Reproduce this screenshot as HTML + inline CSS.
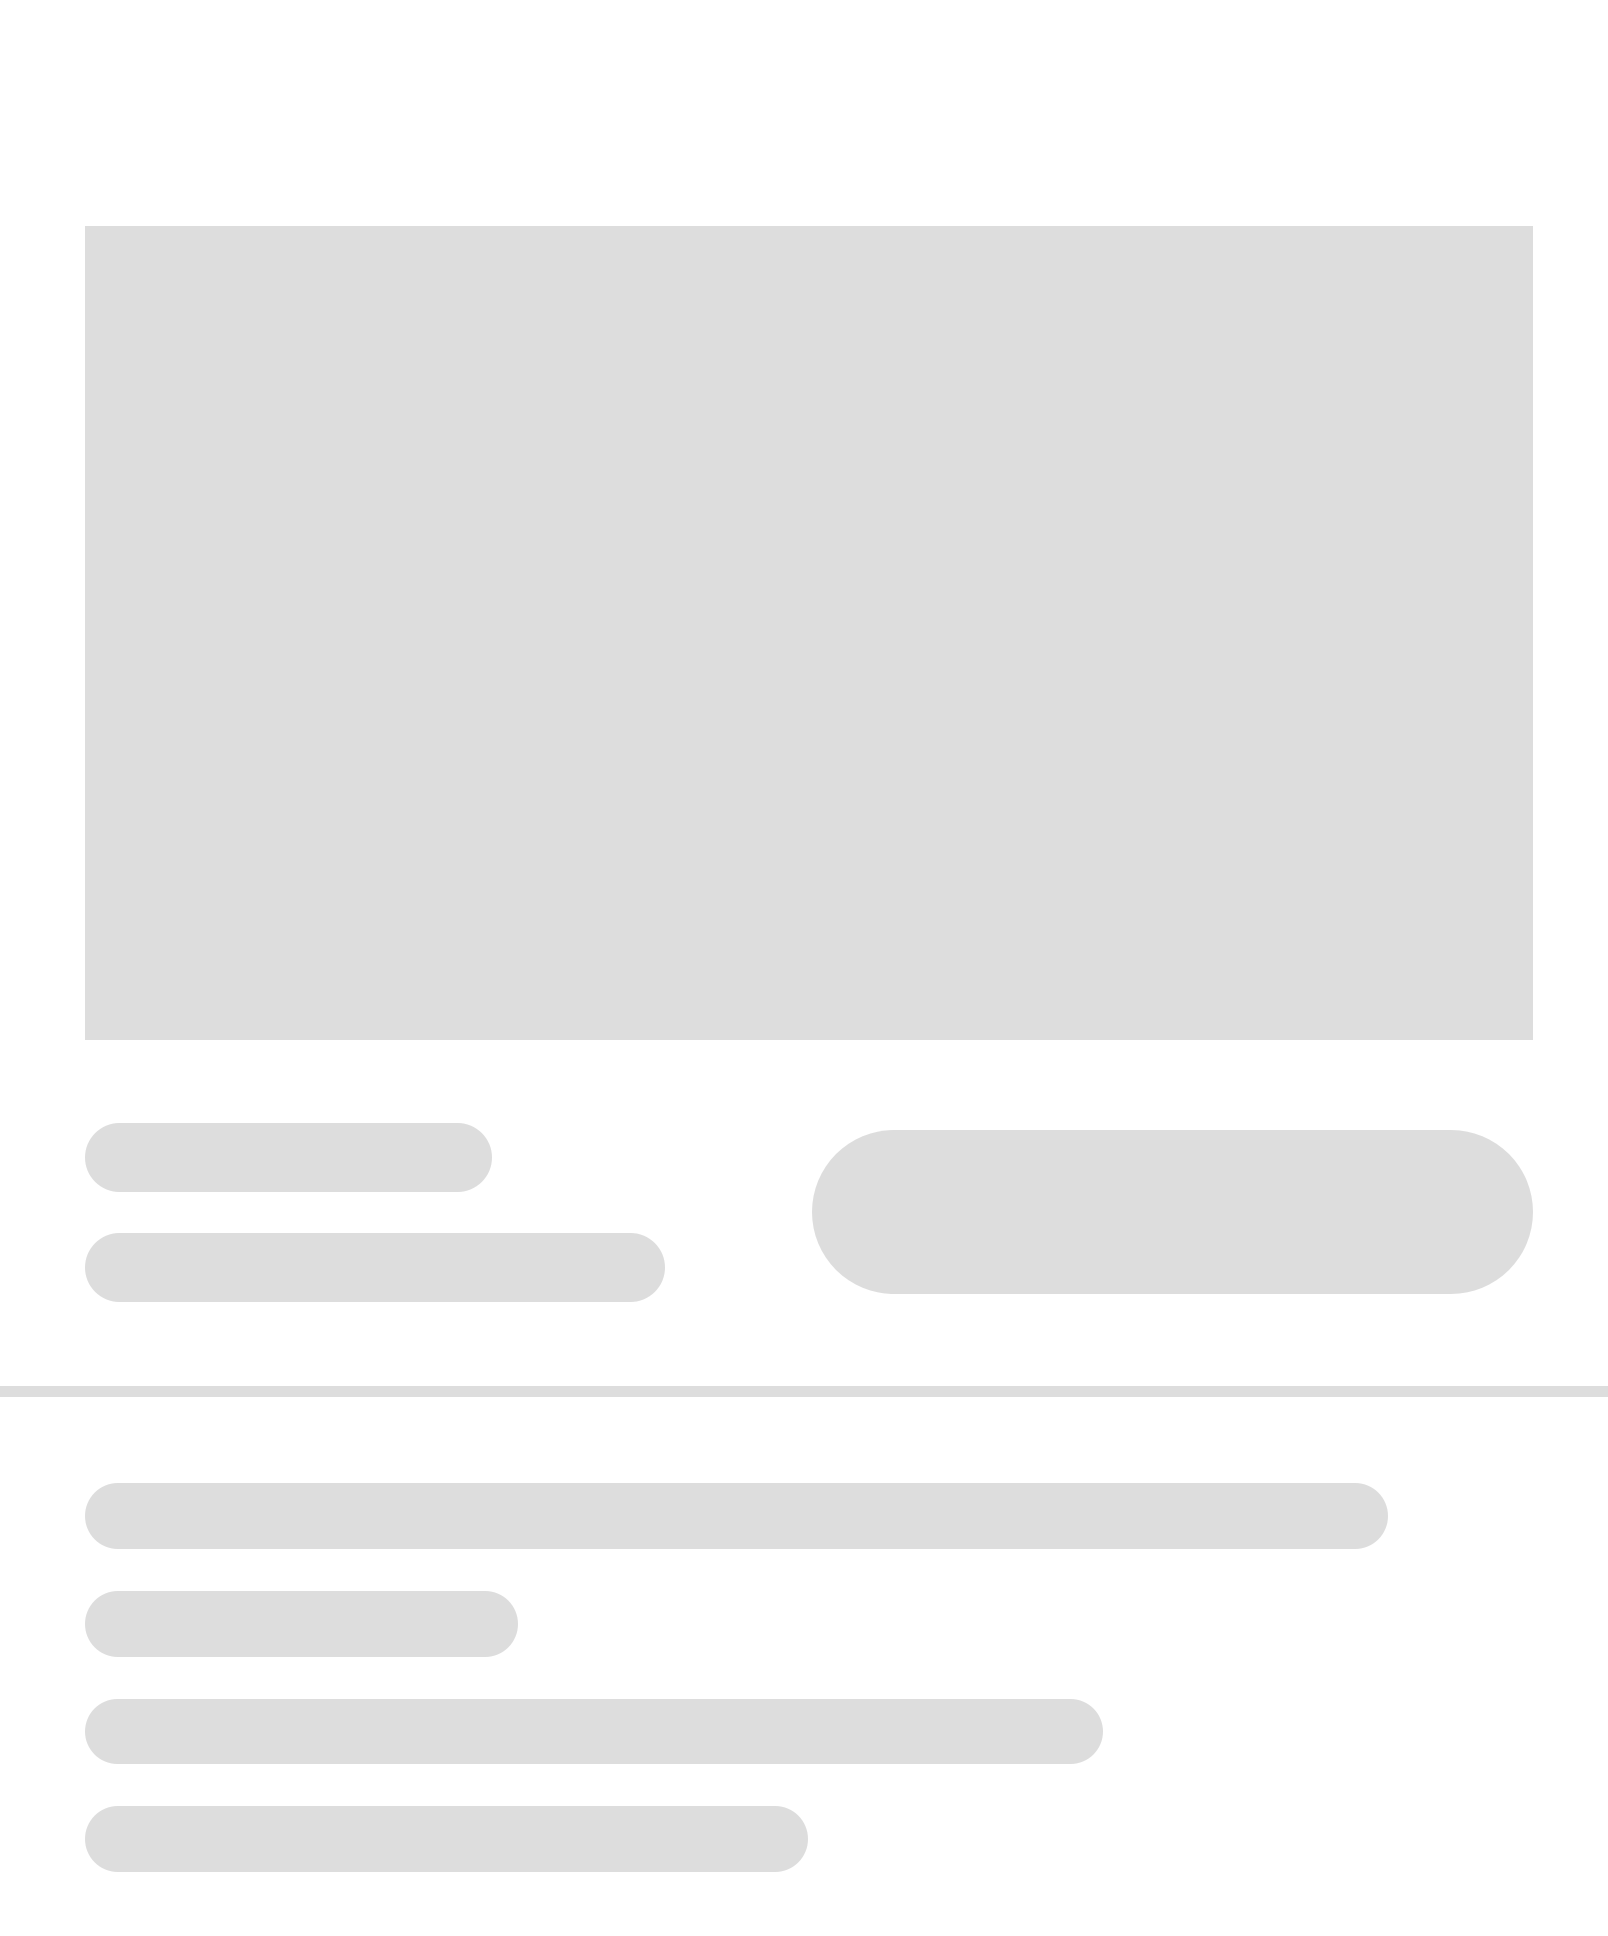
<!DOCTYPE html>
<html><head><meta charset="utf-8"><style>
html,body{margin:0;padding:0;background:#fff;}
body{width:1608px;height:1936px;position:relative;overflow:hidden;font-family:"Liberation Sans",sans-serif;}
.b{position:absolute;background:#dddddd;}
</style></head><body>
<div class="b" style="left:85px;top:226px;width:1448px;height:814px;"></div>
<div class="b" style="left:85px;top:1123px;width:407px;height:69px;border-radius:35px;"></div>
<div class="b" style="left:85px;top:1233px;width:580px;height:69px;border-radius:35px;"></div>
<div class="b" style="left:812px;top:1130px;width:721px;height:164px;border-radius:82px;"></div>
<div class="b" style="left:0;top:1386px;width:1608px;height:11px;"></div>
<div class="b" style="left:85px;top:1483px;width:1303px;height:66px;border-radius:33px;"></div>
<div class="b" style="left:85px;top:1591px;width:433px;height:66px;border-radius:33px;"></div>
<div class="b" style="left:85px;top:1699px;width:1018px;height:65px;border-radius:33px;"></div>
<div class="b" style="left:85px;top:1806px;width:723px;height:66px;border-radius:33px;"></div>
</body></html>
